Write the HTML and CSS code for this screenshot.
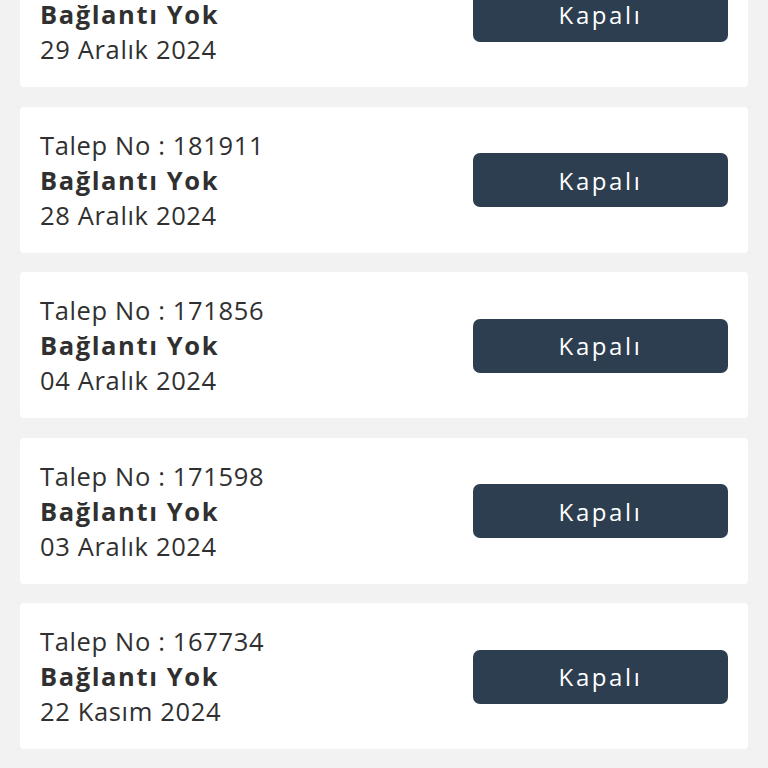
FILE: index.html
```html
<!DOCTYPE html>
<html lang="tr">
<head>
    <meta charset="UTF-8">
    <meta name="viewport" content="width=device-width, initial-scale=1.0">
    <title>Taleplerim</title>
    <link rel="stylesheet" href="styles.css">
</head>
<body>
    <main class="request-list">
        <div class="request-card">
            <div class="request-info">
                <div class="request-no">Talep No : 182004</div>
                <div class="request-title">Bağlantı Yok</div>
                <div class="request-date">29 Aralık 2024</div>
            </div>
            <button class="status-btn">Kapalı</button>
        </div>
        <div class="request-card">
            <div class="request-info">
                <div class="request-no">Talep No : 181911</div>
                <div class="request-title">Bağlantı Yok</div>
                <div class="request-date">28 Aralık 2024</div>
            </div>
            <button class="status-btn">Kapalı</button>
        </div>
        <div class="request-card">
            <div class="request-info">
                <div class="request-no">Talep No : 171856</div>
                <div class="request-title">Bağlantı Yok</div>
                <div class="request-date">04 Aralık 2024</div>
            </div>
            <button class="status-btn">Kapalı</button>
        </div>
        <div class="request-card">
            <div class="request-info">
                <div class="request-no">Talep No : 171598</div>
                <div class="request-title">Bağlantı Yok</div>
                <div class="request-date">03 Aralık 2024</div>
            </div>
            <button class="status-btn">Kapalı</button>
        </div>
        <div class="request-card">
            <div class="request-info">
                <div class="request-no">Talep No : 167734</div>
                <div class="request-title">Bağlantı Yok</div>
                <div class="request-date">22 Kasım 2024</div>
            </div>
            <button class="status-btn">Kapalı</button>
        </div>
    </main>
</body>
</html>
```
FILE: styles.css
```css
body {
    font-family: 'Open Sans', 'Noto Sans', sans-serif;
    margin: 0;
    padding: 0;
    background-color: #f2f2f2;
    color: #303030;
}
.request-list {
    display: flex;
    flex-direction: column;
    gap: 19.6px;
    padding: 0 20px;
    margin-top: -59px;
}
.request-card {
    background-color: #fff;
    border-radius: 4px;
    padding: 21px 20px 20px 20px;
    display: flex;
    align-items: center;
    justify-content: space-between;
}
.request-info {
    font-size: 25.5px;
    line-height: 35px;
    letter-spacing: 0.65px;
}
.request-title {
    font-weight: 700;
    letter-spacing: 1.6px;
}
.status-btn {
    width: 255px;
    height: 54px;
    border: none;
    border-radius: 7px;
    background-color: #2c3e50;
    color: #fff;
    font-family: inherit;
    font-size: 24px;
    letter-spacing: 2.6px;
}
```
